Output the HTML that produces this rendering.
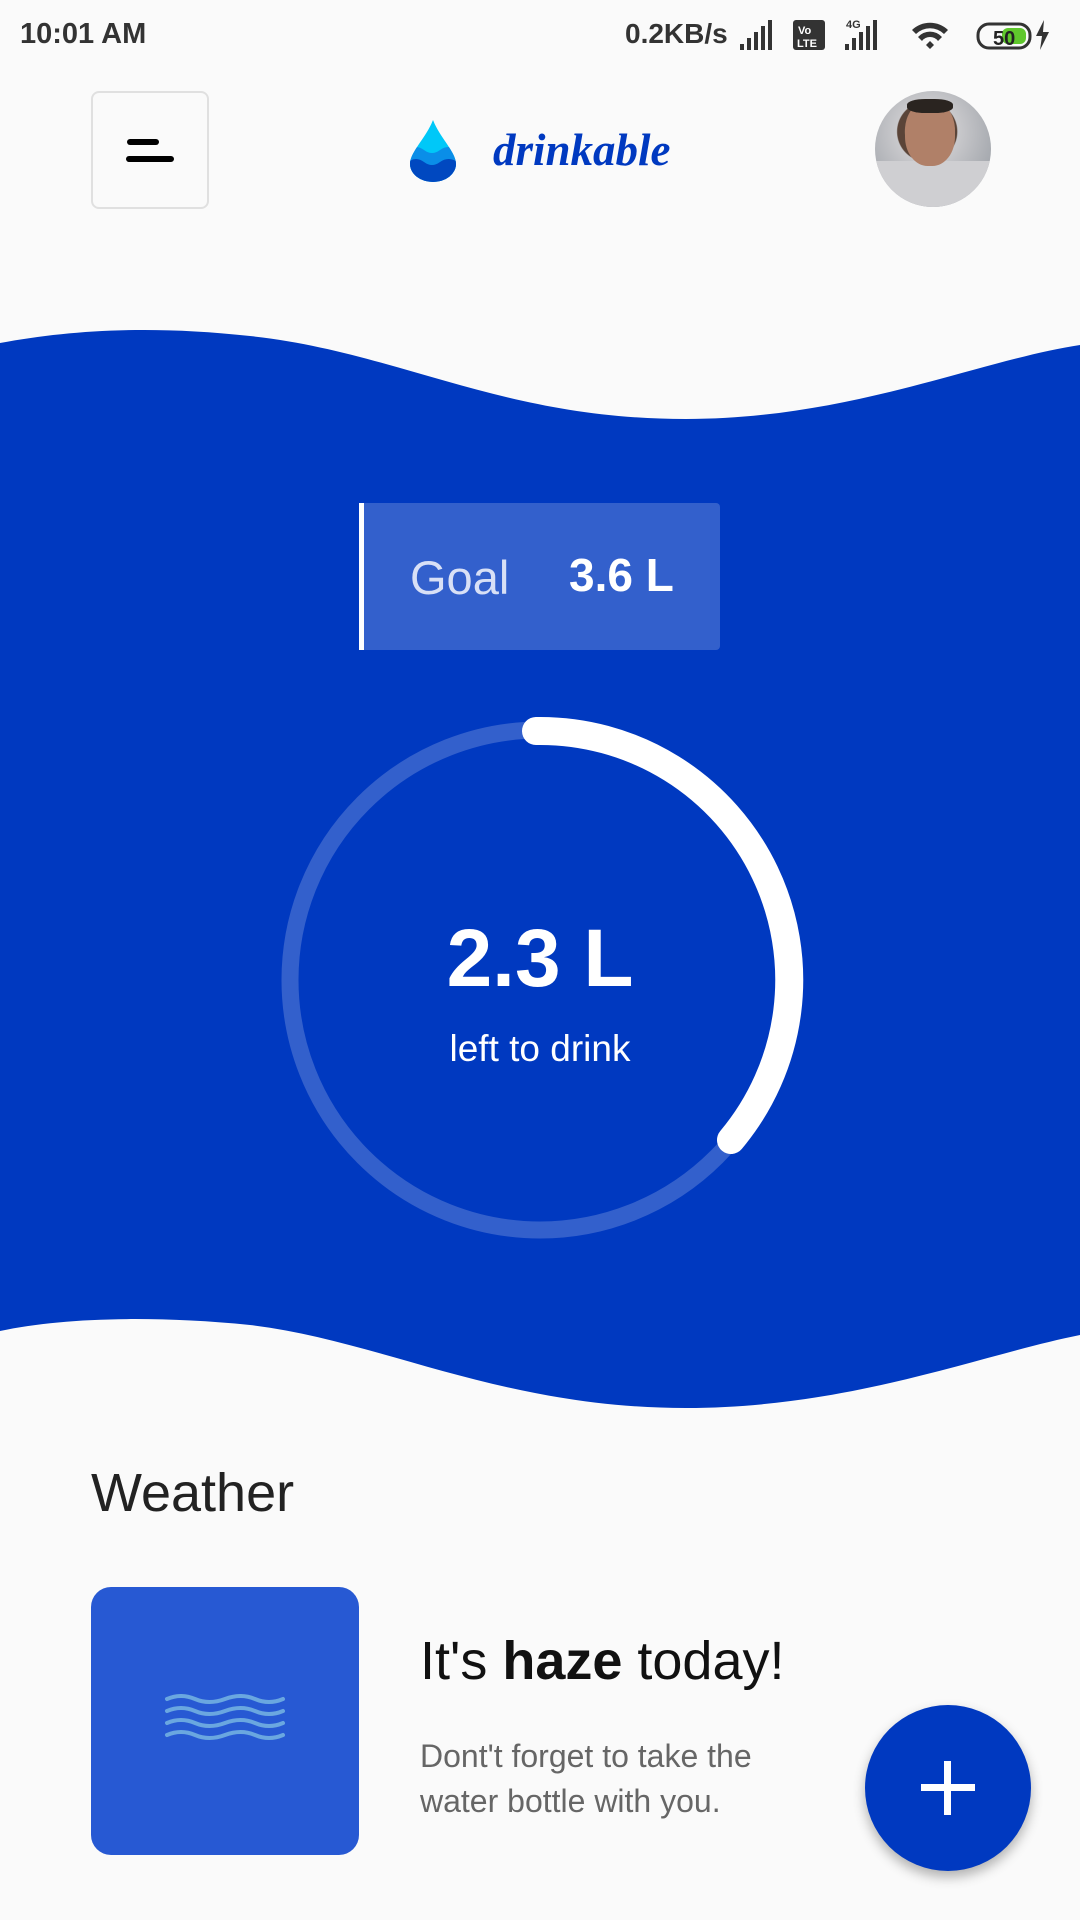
<!DOCTYPE html>
<html><head><meta charset="utf-8"><style>
html,body{margin:0;padding:0;width:1080px;height:1920px;background:#fafafa;font-family:"Liberation Sans",sans-serif;overflow:hidden;position:relative}
.a{position:absolute}
</style></head><body>
<div class="a" style="left:20px;top:18px;font-size:29px;font-weight:bold;color:#333">10:01 AM</div>
<div class="a" style="left:625px;top:18px;font-size:28px;font-weight:bold;color:#333">0.2KB/s</div>
<svg class="a" style="left:740px;top:18px" width="330" height="36" viewBox="0 0 330 36">
<g fill="#333"><rect x="0" y="26" width="4" height="6"/><rect x="7" y="20" width="4" height="12"/><rect x="14" y="14" width="4" height="18"/><rect x="21" y="8" width="4" height="24"/><rect x="28" y="2" width="4" height="30"/>
<rect x="53" y="2" width="32" height="30" rx="3"/>
<rect x="105" y="26" width="4" height="6"/><rect x="112" y="20" width="4" height="12"/><rect x="119" y="14" width="4" height="18"/><rect x="126" y="8" width="4" height="24"/><rect x="133" y="2" width="4" height="30"/>
<path d="M172 12a26 26 0 0 1 36 0l-4 4a20 20 0 0 0 -28 0z M178 19a16 16 0 0 1 24 0l-4 4a10 10 0 0 0 -16 0z M186 27l4-4 4 4-4 4z"/>
<rect x="238" y="6" width="52" height="24" rx="11" fill="none" stroke="#333" stroke-width="3"/>
<path d="M304 2l-8 16h6l-2 14 9-18h-6z"/></g>
<rect x="262" y="10" width="24" height="16" rx="6" fill="#5fc72c"/>
<text x="253" y="27" font-size="20" font-weight="bold" fill="#222" font-family="Liberation Sans">50</text>
<text x="58" y="16" font-size="11" font-weight="bold" fill="#fff" font-family="Liberation Sans">Vo</text>
<text x="57" y="29" font-size="11" font-weight="bold" fill="#fff" font-family="Liberation Sans">LTE</text>
<text x="106" y="10" font-size="11" font-weight="bold" fill="#333" font-family="Liberation Sans">4G</text>
</svg>
<div class="a" style="left:91px;top:91px;border:2px solid #e0e0e0;border-radius:8px;box-sizing:border-box;width:118px;height:118px"></div>
<div class="a" style="top:139px;height:6px;background:#000;border-radius:3px;left:127px;width:32px"></div>
<div class="a" style="left:126px;top:156px;width:48px;height:6px;background:#000;border-radius:3px"></div>
<svg class="a" style="left:408px;top:118px" width="50" height="64" viewBox="0 0 50 64">
<defs><clipPath id="d"><path d="M25 2C18 20 2 34 2 46a23 18 0 0 0 46 0C48 34 32 20 25 2z"/></clipPath></defs>
<g clip-path="url(#d)"><rect width="50" height="64" fill="#00c8f8"/><path d="M0 32q8-6 16 0t16 0 18 0V64H0z" fill="#0a8ee8"/><path d="M0 44q8-6 16 0t16 0 18 0V64H0z" fill="#0048c0"/></g></svg>
<div class="a" style="left:493px;top:124px;font-family:'Liberation Serif',serif;font-style:italic;font-weight:bold;font-size:45px;color:#0039c0">drinkable</div>
<div class="a" style="left:875px;top:91px;width:116px;height:116px;border-radius:50%;background:radial-gradient(circle at 45% 35%,#b88a70 0 22%,#5a4438 23% 30%,#c9c9cc 31%,#8a9098 100%);overflow:hidden"><div style="position:absolute;left:0;top:70px;width:116px;height:60px;background:#cfcfd2"></div><div style="position:absolute;left:30px;top:10px;width:50px;height:65px;border-radius:45%;background:#b08068"></div><div style="position:absolute;left:32px;top:8px;width:46px;height:14px;border-radius:40%;background:#2a2420"></div></div>
<svg class="a" style="left:0;top:0" width="1080" height="1920">
<path d="M0 343C70 330 150 325 250 336 400 352 500 419 686 419 850 419 980 360 1080 345V1335C980 1355 850 1408 686 1408 500 1408 380 1340 250 1325 150 1315 60 1318 0 1331Z" fill="#0039c0"/>
<rect x="359" y="503" width="361" height="147" rx="4" fill="#fff" fill-opacity="0.2"/>
<rect x="359" y="503" width="5" height="147" fill="#fff"/>
<circle cx="540" cy="980" r="250" fill="none" stroke="#fff" stroke-opacity="0.2" stroke-width="17"/>
<path d="M536 731A249 249 0 0 1 731 1140" fill="none" stroke="#fff" stroke-width="28" stroke-linecap="round"/>
</svg>
<div class="a" style="left:410px;top:550px;font-size:47px;color:#d8e0f6">Goal</div>
<div class="a" style="left:569px;top:548px;font-size:46px;color:#fff;font-weight:bold">3.6 L</div>
<div class="a" style="left:0;width:1080px;top:912px;text-align:center;font-size:82px;color:#fff;font-weight:bold">2.3 L</div>
<div class="a" style="left:0;width:1080px;top:1028px;text-align:center;font-size:37px;color:#fff">left to drink</div>
<div class="a" style="left:91px;top:1462px;font-size:54px;color:#222">Weather</div>
<div class="a" style="left:91px;top:1587px;width:268px;height:268px;border-radius:20px;background:#2759d3"></div>
<svg class="a" style="left:164px;top:1694px" width="122" height="50" viewBox="0 0 122 50"><g fill="none" stroke="#6aa7e0" stroke-width="4" stroke-linecap="round"><path d="M3 5q14-6 28 0t30 0 30 0 28 0"/><path d="M3 17q14-6 28 0t30 0 30 0 28 0"/><path d="M3 29q14-6 28 0t30 0 30 0 28 0"/><path d="M3 41q14-6 28 0t30 0 30 0 28 0"/></g></svg>
<div class="a" style="left:420px;top:1630px;font-size:54px;color:#111">It's <b>haze</b> today!</div>
<div class="a" style="left:420px;top:1734px;font-size:32px;line-height:45px;color:#666">Dont't forget to take the<br>water bottle with you.</div>
<div class="a" style="left:865px;top:1705px;width:166px;height:166px;border-radius:50%;background:#0039c0;box-shadow:0 6px 12px rgba(0,0,0,0.3)"></div>
<div class="a" style="left:921px;top:1784px;width:54px;height:7px;background:#fff"></div>
<div class="a" style="left:944px;top:1761px;width:7px;height:54px;background:#fff"></div>
</body></html>
